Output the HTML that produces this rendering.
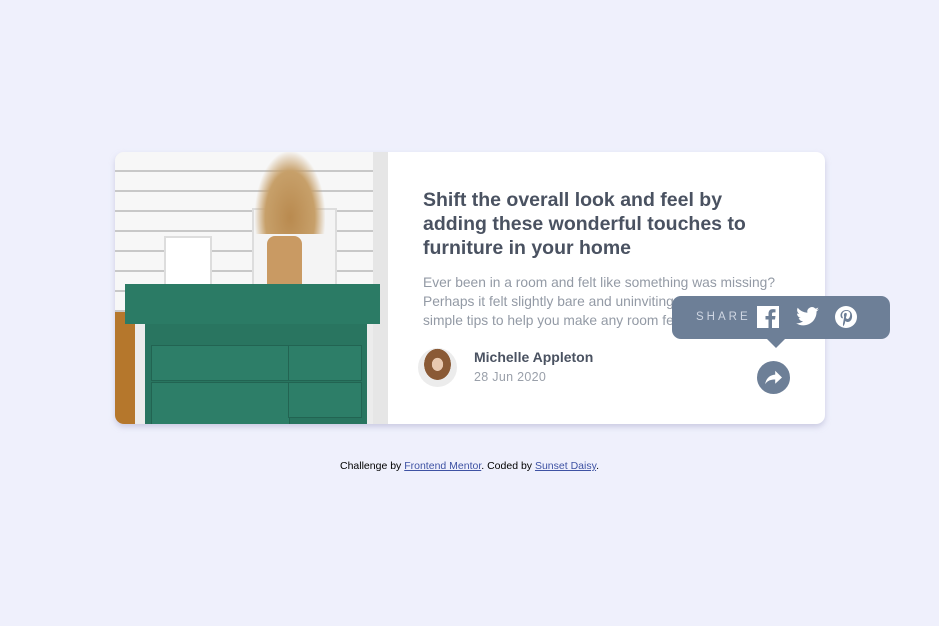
<!DOCTYPE html>
<html><head><style>
body{margin:0;width:939px;height:626px;background:#eff0fc;font-family:"Liberation Sans",sans-serif;position:relative;overflow:hidden}
.card{position:absolute;left:115px;top:152px;width:710px;height:272px;background:#fff;border-radius:9px;box-shadow:0 3px 6px rgba(180,180,210,.6);overflow:hidden}
.img{position:absolute;left:0;top:0;width:273px;height:272px;background:#ececec;overflow:hidden}
.abs{position:absolute}
h1{position:absolute;left:308px;top:36px;margin:0;width:350px;font-size:19.5px;line-height:24px;color:#4a5261;font-weight:bold}
p{position:absolute;left:308px;top:121px;margin:0;width:370px;font-size:13.8px;line-height:19px;color:#939aa5}
.name{position:absolute;left:359px;top:197px;font-size:14px;font-weight:bold;color:#4a5261}
.date{position:absolute;left:359px;top:218px;font-size:12.5px;color:#9aa0aa;letter-spacing:.3px}
.av{position:absolute;left:303px;top:196px;width:39px;height:39px;border-radius:50%;background:radial-gradient(ellipse at 50% 42%,#e8c9b0 0 20%,#8a5a36 21% 48%,#ececec 49%);overflow:hidden}
.tip{position:absolute;left:672px;top:296px;width:218px;height:43px;background:#6d7f97;border-radius:9px}
.tip:after{content:"";position:absolute;left:95px;top:43px;border:9px solid transparent;border-top:9px solid #6d7f97;border-bottom:0}
.share{position:absolute;left:24px;top:15px;font-size:11.5px;letter-spacing:3px;color:#cfd6e2}
.btn{position:absolute;left:757px;top:361px;width:33px;height:33px;border-radius:50%;background:#6d7f97}
.foot{position:absolute;top:460px;width:100%;text-align:center;font-size:10.5px;color:#000}
.foot a{color:#3e52a3}
</style></head><body>
<div class="card">
 <div class="img">
  <div class="abs" style="left:0;top:0;width:258px;height:160px;background:repeating-linear-gradient(#f7f7f7 0 18px,#c8c8c8 18px 20px)"></div>
  <div class="abs" style="left:258px;top:0;width:15px;height:272px;background:#e6e6e6"></div>
  <div class="abs" style="left:0;top:160px;width:20px;height:112px;background:#b5772c"></div>
  <div class="abs" style="left:49px;top:84px;width:44px;height:55px;background:#fff;border:2px solid #ddd"></div>
  <div class="abs" style="left:137px;top:56px;width:81px;height:80px;background:#f4f4f4;border:2px solid #ddd"></div>
  <div class="abs" style="left:152px;top:84px;width:35px;height:70px;background:#c99a63;border-radius:8px 8px 10px 10px"></div>
  <div class="abs" style="left:140px;top:0;width:70px;height:82px;background:radial-gradient(ellipse at 50% 80%,#b98a4f,#c7a06a 50%,transparent 72%)"></div>
  <div class="abs" style="left:10px;top:132px;width:255px;height:40px;background:#2b7b65"></div>
  <div class="abs" style="left:30px;top:172px;width:222px;height:100px;background:#297560"></div>
  <div class="abs" style="left:36px;top:193px;width:137px;height:34px;background:#2d7e68;border:1px solid #226452"></div>
  <div class="abs" style="left:36px;top:230px;width:137px;height:42px;background:#2d7e68;border:1px solid #226452"></div>
  <div class="abs" style="left:173px;top:193px;width:72px;height:34px;background:#2d7e68;border:1px solid #226452"></div>
  <div class="abs" style="left:173px;top:230px;width:72px;height:34px;background:#2d7e68;border:1px solid #226452"></div>
 </div>
 <h1>Shift the overall look and feel by adding these wonderful touches to furniture in your home</h1>
 <p>Ever been in a room and felt like something was missing? Perhaps it felt slightly bare and uninviting. I’ve got some simple tips to help you make any room feel complete.</p>
 <div class="av"></div>
 <div class="name">Michelle Appleton</div>
 <div class="date">28 Jun 2020</div>
</div>
<div class="tip">
 <div class="share">SHARE</div>
 <svg class="abs" style="left:85px;top:10px" width="22" height="22" viewBox="0 0 22 22"><rect width="22" height="22" fill="#fff"/><path d="M15 22V13.5h3l.5-3.5H15V8c0-1 .4-1.6 1.7-1.6h1.8V3.3c-.4 0-1.5-.2-2.7-.2-2.6 0-4.3 1.6-4.3 4.5V10H8.5v3.5h3V22z" fill="#6d7f97"/></svg>
 <svg class="abs" style="left:124px;top:11px" width="23" height="19" viewBox="0 0 24 20"><path fill="#fff" d="M24 2.4c-.9.4-1.8.6-2.8.8 1-.6 1.8-1.6 2.200-2.7-1 .6-2 1-3.1 1.2A4.9 4.9 0 0 0 11.9 6C7.7 5.800 4.1 3.800 1.7.8c-1.3 2.3-.5 5 1.5 6.5-.8 0-1.6-.3-2.2-.6 0 2.4 1.7 4.4 3.9 4.8-.7.2-1.500.2-2.2.1.6 2 2.4 3.4 4.6 3.4A9.9 9.9 0 0 1 0 17.1 14 14 0 0 0 7.5 19.3c9.1 0 14.3-7.7 14-14.6 1-.7 1.8-1.5 2.5-2.3z"/></svg>
 <svg class="abs" style="left:163px;top:10px" width="22" height="22" viewBox="0 0 22 22"><circle cx="11" cy="11" r="11" fill="#fff"/><path fill="#6d7f97" d="M11.5 4C7.5 4 5.5 6.8 5.5 9.2c0 1.4.5 2.7 1.7 3.2.2.1.4 0 .4-.2l.2-.7c0-.2 0-.3-.1-.5-.4-.4-.6-1-.6-1.8 0-2.3 1.7-4.300 4.4-4.300 2.4 0 3.7 1.5 3.7 3.4 0 2.5-1.1 4.7-2.800 4.7-.9 0-1.6-.8-1.4-1.7.3-1.1.8-2.3.8-3.1 0-.7-.4-1.3-1.2-1.3-1 0-1.7 1-1.7 2.3 0 .8.3 1.4.3 1.4L8.1 17c-.3 1.3 0 2.9 0 3.1 0 .1.2.1.2 0 .1-.1 1.2-1.5 1.5-2.9l.6-2.3c.3.6 1.2 1.1 2.1 1.1 2.8 0 4.6-2.5 4.6-5.9C17.1 6.5 14.9 4 11.5 4z"/></svg>
</div>
<div class="btn"><svg class="abs" style="left:8px;top:9px" width="17" height="15" viewBox="0 0 15 13"><path fill="#fff" d="M15 6.5 9 .5v3.5C3.5 4.3 1 8 0 12.5c2-3 4.5-4.2 9-4.2V12z"/></svg></div>
<div class="foot">Challenge by <a href="#">Frontend Mentor</a>. Coded by <a href="#">Sunset Daisy</a>.</div>
</body></html>
